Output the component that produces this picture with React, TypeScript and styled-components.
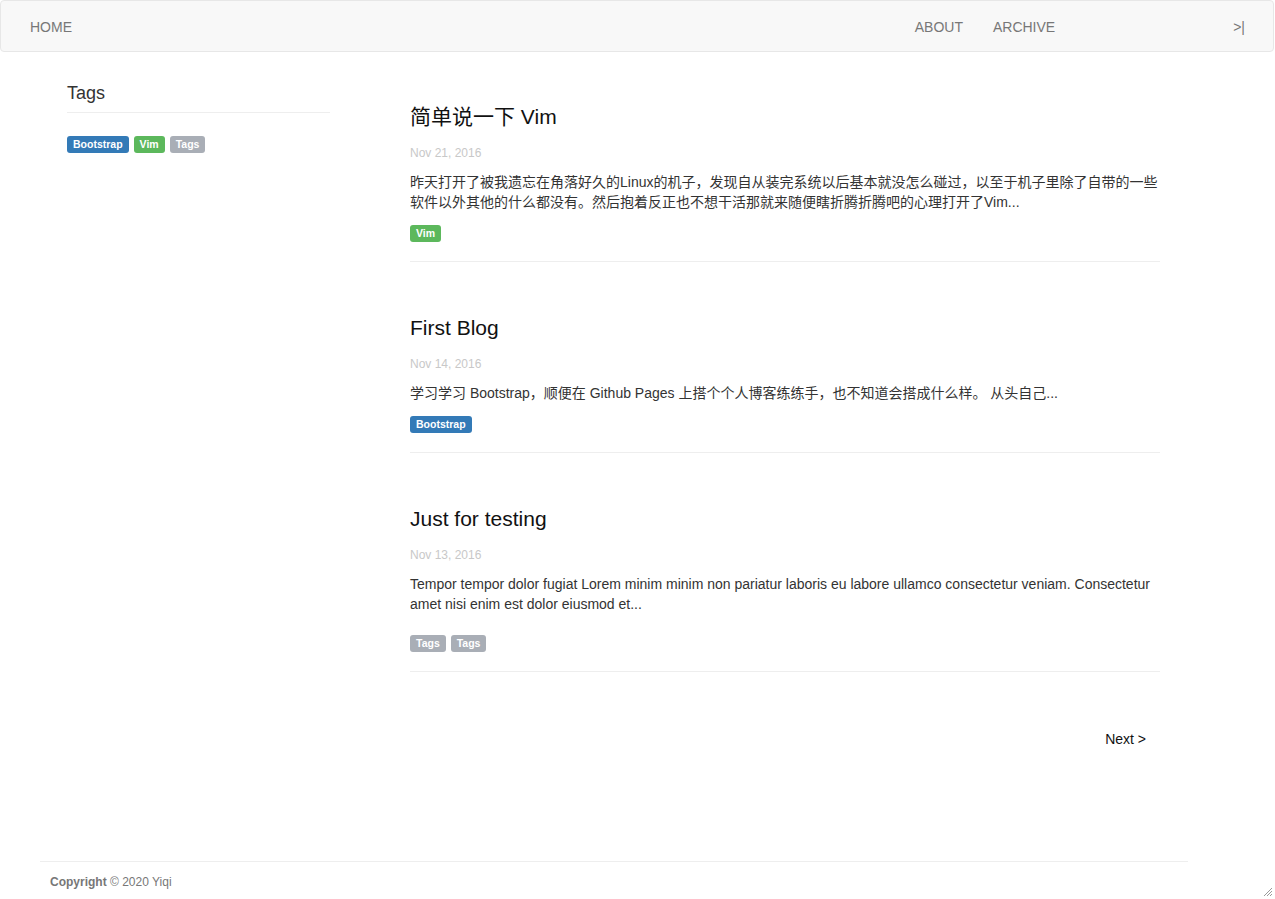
import * as React from 'react'
import styled, { createGlobalStyle } from 'styled-components'

type TagKind = 'primary' | 'success' | 'default'

interface Tag {
  name: string
  kind: TagKind
}

interface Post {
  title: string
  date: string
  excerpt: string
  tags: Tag[]
  loose?: boolean
}

const tagColors: Record<TagKind, string> = {
  primary: '#337ab7',
  success: '#5cb85c',
  default: '#a9aeb6',
}

const posts: Post[] = [
  {
    title: '简单说一下 Vim',
    date: 'Nov 21, 2016',
    excerpt:
      '昨天打开了被我遗忘在角落好久的Linux的机子，发现自从装完系统以后基本就没怎么碰过，以至于机子里除了自带的一些软件以外其他的什么都没有。然后抱着反正也不想干活那就来随便瞎折腾折腾吧的心理打开了Vim...',
    tags: [{ name: 'Vim', kind: 'success' }],
  },
  {
    title: 'First Blog',
    date: 'Nov 14, 2016',
    excerpt:
      '学习学习 Bootstrap，顺便在 Github Pages 上搭个个人博客练练手，也不知道会搭成什么样。 从头自己...',
    tags: [{ name: 'Bootstrap', kind: 'primary' }],
  },
  {
    title: 'Just for testing',
    date: 'Nov 13, 2016',
    excerpt:
      'Tempor tempor dolor fugiat Lorem minim minim non pariatur laboris eu labore ullamco consectetur veniam. Consectetur amet nisi enim est dolor eiusmod et...',
    tags: [
      { name: 'Tags', kind: 'default' },
      { name: 'Tags', kind: 'default' },
    ],
    loose: true,
  },
]

const sidebarTags: Tag[] = [
  { name: 'Bootstrap', kind: 'primary' },
  { name: 'Vim', kind: 'success' },
  { name: 'Tags', kind: 'default' },
]

export default function App() {
  return (
    <>
      <GlobalStyle />
      <Navbar>
        <NavLink>HOME</NavLink>
        <NavRight>
          <NavLink>ABOUT</NavLink>
          <NavLink>ARCHIVE</NavLink>
        </NavRight>
        <NavLink>&gt;|</NavLink>
      </Navbar>

      <Body>
        <Sidebar>
          <SideTitle>Tags</SideTitle>
          <TagRow>
            {sidebarTags.map((t, i) => (
              <Label key={i} kind={t.kind}>
                {t.name}
              </Label>
            ))}
          </TagRow>
        </Sidebar>

        <Main>
          {posts.map((p, i) => (
            <PostItem key={i}>
              <PostTitle>{p.title}</PostTitle>
              <PostDate>{p.date}</PostDate>
              <Excerpt loose={p.loose}>{p.excerpt}</Excerpt>
              <TagRow>
                {p.tags.map((t, j) => (
                  <Label key={j} kind={t.kind}>
                    {t.name}
                  </Label>
                ))}
              </TagRow>
            </PostItem>
          ))}
          <Pager>
            <NextLink>Next &gt;</NextLink>
          </Pager>
        </Main>
      </Body>

      <Footer>
        <b>Copyright</b> © 2020 Yiqi
      </Footer>

      <ResizeGrip width="10" height="10" viewBox="0 0 10 10">
        <path d="M9 1 L1 9 M9 4 L4 9 M9 7 L7 9" stroke="#9a9a9a" strokeWidth="1" />
      </ResizeGrip>
    </>
  )
}

const GlobalStyle = createGlobalStyle`
  body {
    margin: 0;
    background: #fff;
    color: #333;
    font-family: "Liberation Sans", Arial, "Noto Sans CJK SC", sans-serif;
    font-size: 14px;
    line-height: 1.42857;
  }
`

const Navbar = styled.div`
  display: flex;
  align-items: center;
  height: 50px;
  padding: 0 13px 0 14px;
  margin-right: 1px;

  background: #f8f8f8;
  border: 1px solid #e7e7e7;
  border-radius: 4px;
`

const NavRight = styled.div`
  display: flex;
  margin-left: auto;
  margin-right: 148px;
`

const NavLink = styled.a`
  padding: 16px 15px 14px;
  line-height: 20px;
  font-size: 14px;
  color: #777;
  cursor: pointer;
`

const Body = styled.div`
  display: flex;
  align-items: flex-start;
  padding-left: 67px;
  gap: 80px;
  height: 809px;
`

const Sidebar = styled.div`
  width: 263px;
  padding-top: 31px;
`

const SideTitle = styled.div`
  font-size: 18px;
  line-height: 20px;
  color: #333;
  padding-bottom: 9px;
  border-bottom: 1px solid #eee;
  margin-bottom: 23px;
`

const TagRow = styled.div`
  display: flex;
  gap: 5px;
`

const Label = styled.span<{ kind: TagKind }>`
  display: inline-block;
  padding: 3px 6px 3px;
  font-size: 10.5px;
  font-weight: 700;
  line-height: 11px;
  color: #fff;
  background: ${p => tagColors[p.kind]};
  border-radius: 3px;
`

const Main = styled.div`
  width: 750px;
  padding-top: 54px;
`

const PostItem = styled.div`
  padding-bottom: 19px;
  border-bottom: 1px solid #eee;
  margin-bottom: 55px;
`

const PostTitle = styled.h2`
  margin: 0 0 17px 0;
  font-size: 21px;
  font-weight: 400;
  line-height: 22px;
  color: #111;
`

const PostDate = styled.div`
  font-size: 12px;
  line-height: 17px;
  color: #c8c8c8;
  margin-bottom: 10px;
`

const Excerpt = styled.p<{ loose?: boolean }>`
  margin: 0 0 ${p => (p.loose ? '21px' : '13px')} 0;
  font-size: 14px;
  line-height: 20px;
  color: #333;
`

const Pager = styled.div`
  display: flex;
  justify-content: flex-end;
  padding-top: 2px;
`

const NextLink = styled.a`
  padding: 0 14px;
  line-height: 20px;
  font-size: 14px;
  color: #111;
`

const Footer = styled.div`
  margin: 0 87px 0 40px;
  padding: 12px 10px 8px;
  border-top: 1px solid #eee;
  font-size: 12px;
  line-height: 17px;
  color: #777;

  b {
    font-weight: 700;
  }
`

const ResizeGrip = styled.svg`
  position: absolute;
  right: 2px;
  top: 887px;
`
